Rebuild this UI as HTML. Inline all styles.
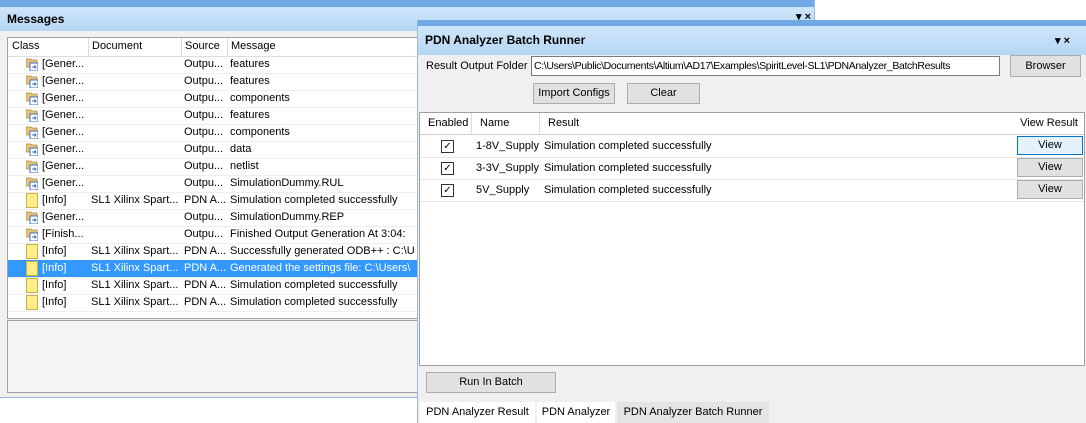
<!DOCTYPE html><html><head><style>
body{margin:0;width:1086px;height:423px;background:#fff;position:relative;overflow:hidden;font-family:"Liberation Sans",sans-serif;font-size:11px;color:#000}
.a{position:absolute}
#msg{left:0;top:0;width:814px;height:397px;background:#f0f0f0;border-right:1px solid #9ab9dd;border-bottom:1px solid #9ab9dd}
#msg .top{left:0;top:0;width:814px;height:7px;background:#71a8e6}
.tb{background:linear-gradient(#cfe6fb,#b6d6f4);font-weight:bold;font-size:12px}
#list{left:7px;top:37px;width:808px;height:280px;background:#fff;border:1px solid #a0a0a0}
.row{position:absolute;left:0;height:17px;width:808px;border-bottom:1px solid #eee;line-height:17px;white-space:nowrap}
.row span{position:absolute;top:0}
.sel{background:#3399ff;color:#fff}
.ico{position:absolute;left:18px;top:2px;width:12px;height:13px}
#br{left:417px;top:20px;width:669px;height:403px;background:#f0f0f0;border-left:1px solid #9ab9dd}
.btn{position:absolute;background:#e1e1e1;border:1px solid #adadad;text-align:center;font-size:11px;box-sizing:border-box}
</style></head><body>
<div id="msg" class="a">
<div class="a top"></div>
<div class="a tb" style="left:0;top:7px;width:814px;height:24px;line-height:24px;padding-left:7px;box-sizing:border-box">Messages</div>
<div class="a" style="left:796px;top:10px;font-size:11px;font-weight:bold">▾ ×</div>
<div id="list" class="a">
<div class="row" style="top:0;height:18px;border-bottom:1px solid #ddd"><span style="left:4px">Class</span><span style="left:80px;border-left:1px solid #ddd;padding-left:3px;height:18px">Document</span><span style="left:173px;border-left:1px solid #ddd;padding-left:3px;height:18px">Source</span><span style="left:219px;border-left:1px solid #ddd;padding-left:3px;height:18px">Message</span></div>
</div>
<div class="a" style="left:7px;top:320px;width:808px;height:71px;background:#f4f4f4;border:1px solid #a0a0a0"></div>
</div>
<div id="br" class="a">
<div class="a" style="left:0;top:0;width:669px;height:6px;background:#71a8e6"></div>
<div class="a tb" style="left:0;top:6px;width:669px;height:29px;line-height:29px;padding-left:7px;box-sizing:border-box">PDN Analyzer Batch Runner</div>
<div class="a" style="left:637px;top:14px;font-size:11px;font-weight:bold">▾ ×</div>
<div class="a" style="left:8px;top:40px;font-size:11px">Result Output Folder</div>
<div class="a" style="left:113px;top:36px;width:469px;height:20px;background:#fff;border:1px solid #7a7a7a;box-sizing:border-box;line-height:18px;padding-left:2px;font-size:10.5px;letter-spacing:-0.35px;white-space:nowrap;overflow:hidden">C:\Users\Public\Documents\Altium\AD17\Examples\SpiritLevel-SL1\PDNAnalyzer_BatchResults</div>
<div class="btn" style="left:592px;top:35px;width:71px;height:22px;line-height:20px">Browser</div>
<div class="btn" style="left:115px;top:63px;width:82px;height:21px;line-height:19px">Import Configs</div>
<div class="btn" style="left:209px;top:63px;width:73px;height:21px;line-height:19px">Clear</div>
<div class="a" style="left:1px;top:92px;width:666px;height:254px;background:#fff;border:1px solid #a0a0a0;box-sizing:border-box">
<div class="a" style="left:0;top:0;width:664px;height:21px;border-bottom:1px solid #ccc;line-height:21px">
<span class="a" style="left:8px">Enabled</span><span class="a" style="left:51px;border-left:1px solid #ddd;height:21px;padding-left:8px">Name</span><span class="a" style="left:119px;border-left:1px solid #ddd;height:21px;padding-left:8px">Result</span><span class="a" style="right:6px">View Result</span></div>
</div>
<div class="btn" style="left:8px;top:352px;width:130px;height:21px;line-height:19px">Run In Batch</div>
<div class="a" style="left:0;top:381px;width:669px;height:22px;background:#f0f0f0"></div>
<div class="a" style="left:2px;top:382px;width:115px;height:21px;background:#fff;line-height:21px;text-align:center">PDN Analyzer Result</div>
<div class="a" style="left:119px;top:382px;width:78px;height:21px;background:#fff;line-height:21px;text-align:center">PDN Analyzer</div>
<div class="a" style="left:199px;top:382px;width:152px;height:21px;background:#e4e4e4;line-height:21px;text-align:center">PDN Analyzer Batch Runner</div>
</div>
<script>
var rows=[["g","[Gener...","","Outpu...","features"],["g","[Gener...","","Outpu...","features"],["g","[Gener...","","Outpu...","components"],["g","[Gener...","","Outpu...","features"],["g","[Gener...","","Outpu...","components"],["g","[Gener...","","Outpu...","data"],["g","[Gener...","","Outpu...","netlist"],["g","[Gener...","","Outpu...","SimulationDummy.RUL"],["i","[Info]","SL1 Xilinx Spart...","PDN A...","Simulation completed successfully"],["g","[Gener...","","Outpu...","SimulationDummy.REP"],["g","[Finish...","","Outpu...","Finished Output Generation At 3:04:"],["i","[Info]","SL1 Xilinx Spart...","PDN A...","Successfully generated ODB++ : C:\\U"],["i","[Info]","SL1 Xilinx Spart...","PDN A...","Generated the settings file: C:\\Users\\"],["i","[Info]","SL1 Xilinx Spart...","PDN A...","Simulation completed successfully"],["i","[Info]","SL1 Xilinx Spart...","PDN A...","Simulation completed successfully"]];
var L=document.getElementById('list'),h='';
rows.forEach(function(r,i){var ic=r[0]=='g'?'<svg class="ico" viewBox="0 0 12 13"><path d="M0 1h5l1 1h5v7H0z" fill="#e8c27a" stroke="#b08a40" stroke-width=".8"/><rect x="4" y="5" width="8" height="8" fill="#fff" stroke="#3a6fc0"/><path d="M6 9h4M8.5 7.5L10 9 8.5 10.5" stroke="#3a6fc0" fill="none"/></svg>':'<div class="ico" style="left:18px;top:1px;width:12px;height:15px;background:#ffee88;border:1px solid #c9b040;box-sizing:border-box"></div>';
h+='<div class="row'+(i==12?' sel':'')+'" style="top:'+(18+i*17)+'px">'+ic+'<span style="left:34px">'+r[1]+'</span><span style="left:83px;color:'+(i==12?'#fff':'#000')+'">'+r[2]+'</span><span style="left:176px">'+r[3]+'</span><span style="left:222px">'+r[4]+'</span></div>';});
L.innerHTML+=h;
var B=document.getElementById('br'),n=['1-8V_Supply','3-3V_Supply','5V_Supply'],g='';
n.forEach(function(s,i){var t=115+i*22;g+='<div class="a" style="left:2px;top:'+t+'px;width:664px;height:22px;border-bottom:1px solid #e6e6e6;line-height:22px"><div class="a" style="left:21px;top:5px;width:11px;height:11px;border:1px solid #333;font-size:10px;line-height:11px;text-align:center">✓</div><span class="a" style="left:56px">'+s+'</span><span class="a" style="left:124px">Simulation completed successfully</span><div class="btn" style="left:597px;top:1px;width:66px;height:19px;line-height:17px;'+(i==0?'background:#e5f1fb;border-color:#0078d7':'')+'">View</div></div>';});
B.innerHTML+=g;
</script>
</body></html>
